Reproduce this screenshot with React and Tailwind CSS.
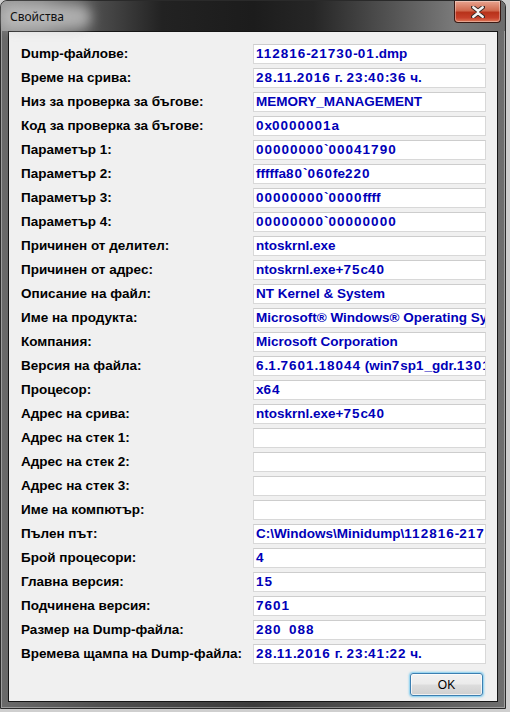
import React from "react";

const rows = [
  ["Dump-файлове:", "112816-21730-01.dmp"],
  ["Време на срива:", "28.11.2016 г. 23:40:36 ч."],
  ["Низ за проверка за бъгове:", "MEMORY_MANAGEMENT"],
  ["Код за проверка за бъгове:", "0x0000001a"],
  ["Параметър 1:", "00000000`00041790"],
  ["Параметър 2:", "fffffa80`060fe220"],
  ["Параметър 3:", "00000000`0000ffff"],
  ["Параметър 4:", "00000000`00000000"],
  ["Причинен от делител:", "ntoskrnl.exe"],
  ["Причинен от адрес:", "ntoskrnl.exe+75c40"],
  ["Описание на файл:", "NT Kernel & System"],
  ["Име на продукта:", "Microsoft® Windows® Operating System"],
  ["Компания:", "Microsoft Corporation"],
  ["Версия на файла:", "6.1.7601.18044 (win7sp1_gdr.130104-1431)"],
  ["Процесор:", "x64"],
  ["Адрес на срива:", "ntoskrnl.exe+75c40"],
  ["Адрес на стек 1:", ""],
  ["Адрес на стек 2:", ""],
  ["Адрес на стек 3:", ""],
  ["Име на компютър:", ""],
  ["Пълен път:", "C:\\Windows\\Minidump\\112816-21730-01.dmp"],
  ["Брой процесори:", "4"],
  ["Главна версия:", "15"],
  ["Подчинена версия:", "7601"],
  ["Размер на Dump-файла:", "280  088"],
  ["Времева щампа на Dump-файла:", "28.11.2016 г. 23:41:22 ч."],
];

function FieldText({ text }) {
  return text.split(/(\d+)/).map((part, i) =>
    /^\d+$/.test(part) ? (
      <span key={i} className="tracking-[1px]">
        {part}
      </span>
    ) : (
      <span key={i}>{part}</span>
    )
  );
}

function CloseButton() {
  return (
    <div className="flex h-[22px] w-[47px] items-center justify-center rounded-b-[4px] border border-t-0 border-[#3a1a14] bg-[linear-gradient(to_bottom,#e8a490_0%,#d06a4f_45%,#b8321a_55%,#c6402a_80%,#de7a5a_100%)] shadow-[inset_0_0_0_1px_rgba(255,255,255,0.35)]">
      <svg width="14" height="12" viewBox="0 0 14 12">
        <path
          d="M2 1 L7 5 L12 1 M2 11 L7 7 L12 11"
          stroke="#3a2a26"
          strokeWidth="4.2"
          fill="none"
          strokeLinecap="round"
        />
        <path
          d="M2.3 1.3 L7 5 L11.7 1.3 M2.3 10.7 L7 7 L11.7 10.7 M7 5 L7 7"
          stroke="#f4f4f4"
          strokeWidth="2.4"
          fill="none"
          strokeLinecap="round"
        />
      </svg>
    </div>
  );
}

export default function App() {
  return (
    <div
      className="relative h-[712px] w-[510px] overflow-hidden bg-[#cfcfcf]"
      style={{ fontFamily: "'Liberation Sans', Arial, sans-serif" }}
    >
      {/* window frame */}
      <div className="flex h-[709px] w-[506px] flex-col rounded-t-[7px] border border-[#2a2a2a] bg-[linear-gradient(to_right,#6a6a6a_0%,#505050_20%,#3c3c3c_50%,#585858_80%,#6e6e6e_100%)] shadow-[inset_0_0_0_1px_rgba(255,255,255,0.35)]">
        {/* title bar */}
        <div className="relative flex h-[30px] shrink-0 items-start justify-between rounded-t-[6px] bg-[linear-gradient(to_right,#9a9a9a_0%,#8c8c8c_8%,#4a4a4a_20%,#222222_32%,#1c1c1c_50%,#262626_62%,#555555_78%,#7a7a7a_90%,#6c6c6c_100%)]">
          <div className="absolute left-[0px] top-[4px] h-[24px] w-[90px] rounded-full bg-[#c4c4c4] opacity-75 blur-[6px]" />
          <span
            className="relative ml-[9px] mt-[8px] text-[12px] leading-[16px] text-[#101010]"
            style={{ fontFamily: "'Noto Sans', 'Open Sans', sans-serif" }}
          >
            Свойства
          </span>
          <div className="mr-[4px]">
            <CloseButton />
          </div>
        </div>

        {/* client area */}
        <div className="mx-[7px] flex flex-1 flex-col border border-[#151515] bg-[#f0f0f0] pb-[5px]">
          <div className="flex flex-col gap-[4px] pt-[12px]">
            {rows.map(([label, value]) => (
              <div key={label} className="flex h-[20px] items-center">
                <div className="w-[244px] shrink-0 whitespace-nowrap pl-[12px] text-[13.5px] font-bold leading-[16px] text-black">
                  {label}
                </div>
                <div className="flex h-[20px] w-[233px] items-center overflow-hidden whitespace-pre border border-[#d8d8d8] border-t-[#cdcdcd] bg-white pl-[2px] text-[13.5px] font-bold leading-[16px] text-[#0000b8]">
                  <FieldText text={value} />
                </div>
              </div>
            ))}
          </div>
          <div className="mt-auto flex justify-end pr-[14px]">
            <button className="flex h-[23px] w-[73px] items-center justify-center rounded-[3px] border border-[#3c7fb1] bg-[linear-gradient(to_bottom,#f2f2f2_0%,#ebebeb_48%,#dddddd_52%,#cfcfcf_100%)] text-[12px] text-black shadow-[0_0_2px_1px_rgba(80,190,240,0.7),inset_0_0_0_1px_rgba(255,255,255,0.7)]">
              OK
            </button>
          </div>
        </div>
        <div className="h-[6px] shrink-0" />
      </div>
    </div>
  );
}
